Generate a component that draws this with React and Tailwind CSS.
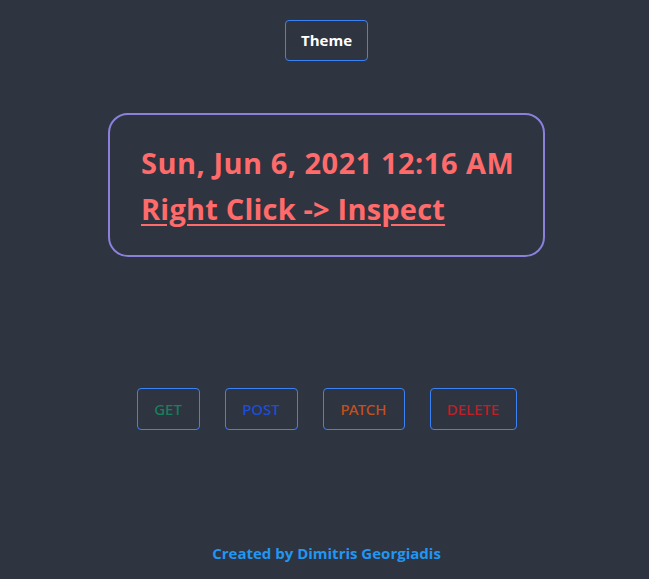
export default function App() {
  const font = { fontFamily: '"Open Sans", "Noto Sans", sans-serif' };
  return (
    <div className="h-[579px] w-full bg-[#2e3440] flex flex-col items-center pl-[4px]" style={font}>
      <button className="mt-[20px] h-[41px] w-[83px] rounded-[4px] border border-[#3b82f6] text-white font-bold text-[15px]">
        Theme
      </button>
      <div className="mt-[52px] w-[437px] h-[144px] rounded-[20px] border-2 border-[#8b80dc] pl-[31px] pt-[25px] text-[#ff6b6b] font-bold">
        <div className="text-[29px] leading-[46px] tracking-[0.5px]">Sun, Jun 6, 2021 12:16 AM</div>
        <div className="text-[29px] leading-[46px] tracking-[0.2px] underline underline-offset-[4px]">Right Click -&gt; Inspect</div>
      </div>
      <div className="mt-[131px] flex gap-[25px] text-[15px] font-medium font-['Noto_Sans',sans-serif]">
        <button className="h-[42px] w-[63px] rounded-[4px] border border-[#3b82f6] text-[#17805c]">GET</button>
        <button className="h-[42px] w-[73px] rounded-[4px] border border-[#3b82f6] text-[#1d4ed8]">POST</button>
        <button className="h-[42px] w-[82px] rounded-[4px] border border-[#3b82f6] text-[#c2501c]">PATCH</button>
        <button className="h-[42px] w-[87px] rounded-[4px] border border-[#3b82f6] text-[#c01f26]">DELETE</button>
      </div>
      <div className="mt-[112px] text-[15px] font-bold text-[#2196f3]">Created by Dimitris Georgiadis</div>
    </div>
  );
}
